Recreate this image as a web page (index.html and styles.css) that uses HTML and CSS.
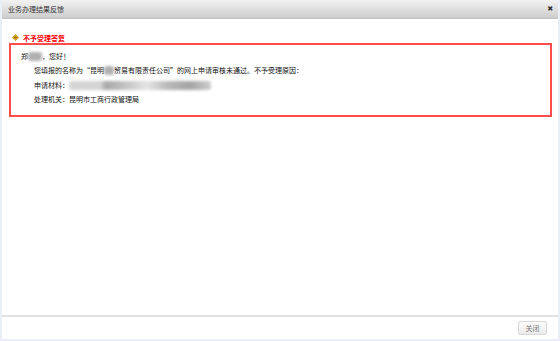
FILE: index.html
```html
<!DOCTYPE html>
<html lang="zh-CN">
<head>
  <meta charset="UTF-8">
  <title>业务办理结果反馈</title>
  <link rel="stylesheet" href="styles.css">
</head>
<body>
  <div class="dialog">
    <div class="titlebar">
      <span class="title">业务办理结果反馈</span>
      <span class="close">✖</span>
    </div>

    <div class="content">
      <div class="heading">
        <svg class="bullet" width="7" height="7" viewBox="0 0 7 7">
          <path d="M3.5 0.3 L6.7 3.5 L3.5 6.7 L0.3 3.5 Z" fill="#e6b422" stroke="#a67c12" stroke-width="0.6"/>
          <path d="M2 3.5 H4.6 M3.6 2.4 L4.7 3.5 L3.6 4.6" stroke="#7a4d00" stroke-width="0.8" fill="none"/>
        </svg>
        <span>不予受理答复</span>
      </div>

      <div class="reply">
        <p class="greet">郑<span class="blur" style="width:14px"></span>，您好！</p>
        <p class="line">您填报的名称为“昆明<span class="blur" style="width:10px"></span>贸易有限责任公司”的网上申请审核未通过。不予受理原因：</p>
        <p class="line">申请材料：<span class="blur long" style="width:142px"></span></p>
        <p class="line">处理机关：昆明市工商行政管理局</p>
      </div>
    </div>

    <div class="footer">
      <button class="btn">关闭</button>
    </div>
  </div>
</body>
</html>
```

FILE: styles.css
```css
body {
  margin: 0;
  font-family: "Noto Sans CJK SC", "Liberation Sans", sans-serif;
  font-size: 7px;
  color: #111;
  background: #fff;
}

.dialog {
  width: 560px;
  height: 341px;
  box-sizing: border-box;
  border: 2px solid #e9eef7;
  border-top: none;
  display: flex;
  flex-direction: column;
}

.titlebar {
  height: 18px;
  background: linear-gradient(#f2f2f2, #cdcdcd);
  border-bottom: 1px solid #c2c2c2;
  display: flex;
  align-items: center;
  justify-content: space-between;
  padding: 0 5px 0 6px;
  color: #333;
}

.close {
  font-size: 7px;
  font-weight: bold;
  color: #333;
  font-family: "DejaVu Sans", sans-serif;
}

.content {
  flex: 1;
  padding: 13px 6px 0 7px;
}

.heading {
  display: flex;
  align-items: center;
  height: 11px;
  padding-left: 3px;
  gap: 4px;
  color: #f00;
  font-weight: bold;
}

.reply {
  border: 2px solid #ff4d4d;
  padding: 4px 10px 8px;
}

.reply p {
  margin: 0;
  line-height: 14.4px;
  height: 14.4px;
  white-space: nowrap;
}

.reply .line {
  padding-left: 13px;
}

.blur {
  display: inline-block;
  height: 9px;
  vertical-align: -2px;
  background: #b0b0b0;
  border-radius: 3px;
  filter: blur(1.4px);
}

.blur.long {
  background: linear-gradient(to right, #d4d4d4 0%, #d4d4d4 22%, #a8a8a8 26%, #c4c4c4 40%, #e4e4e4 55%, #b8b8b8 70%, #a4a4a4 85%, #cccccc 100%);
}

.footer {
  border-top: 2px solid #e0e0e0;
  height: 21px;
  display: flex;
  justify-content: flex-end;
  align-items: center;
  padding: 0 11px 1px 0;
}

.btn {
  font-family: inherit;
  font-size: 7px;
  color: #777;
  background: linear-gradient(#fafafa, #ececec);
  border: 1px solid #d8d8d8;
  border-radius: 2px;
  width: 29px;
  height: 14px;
  padding: 0;
}
```
